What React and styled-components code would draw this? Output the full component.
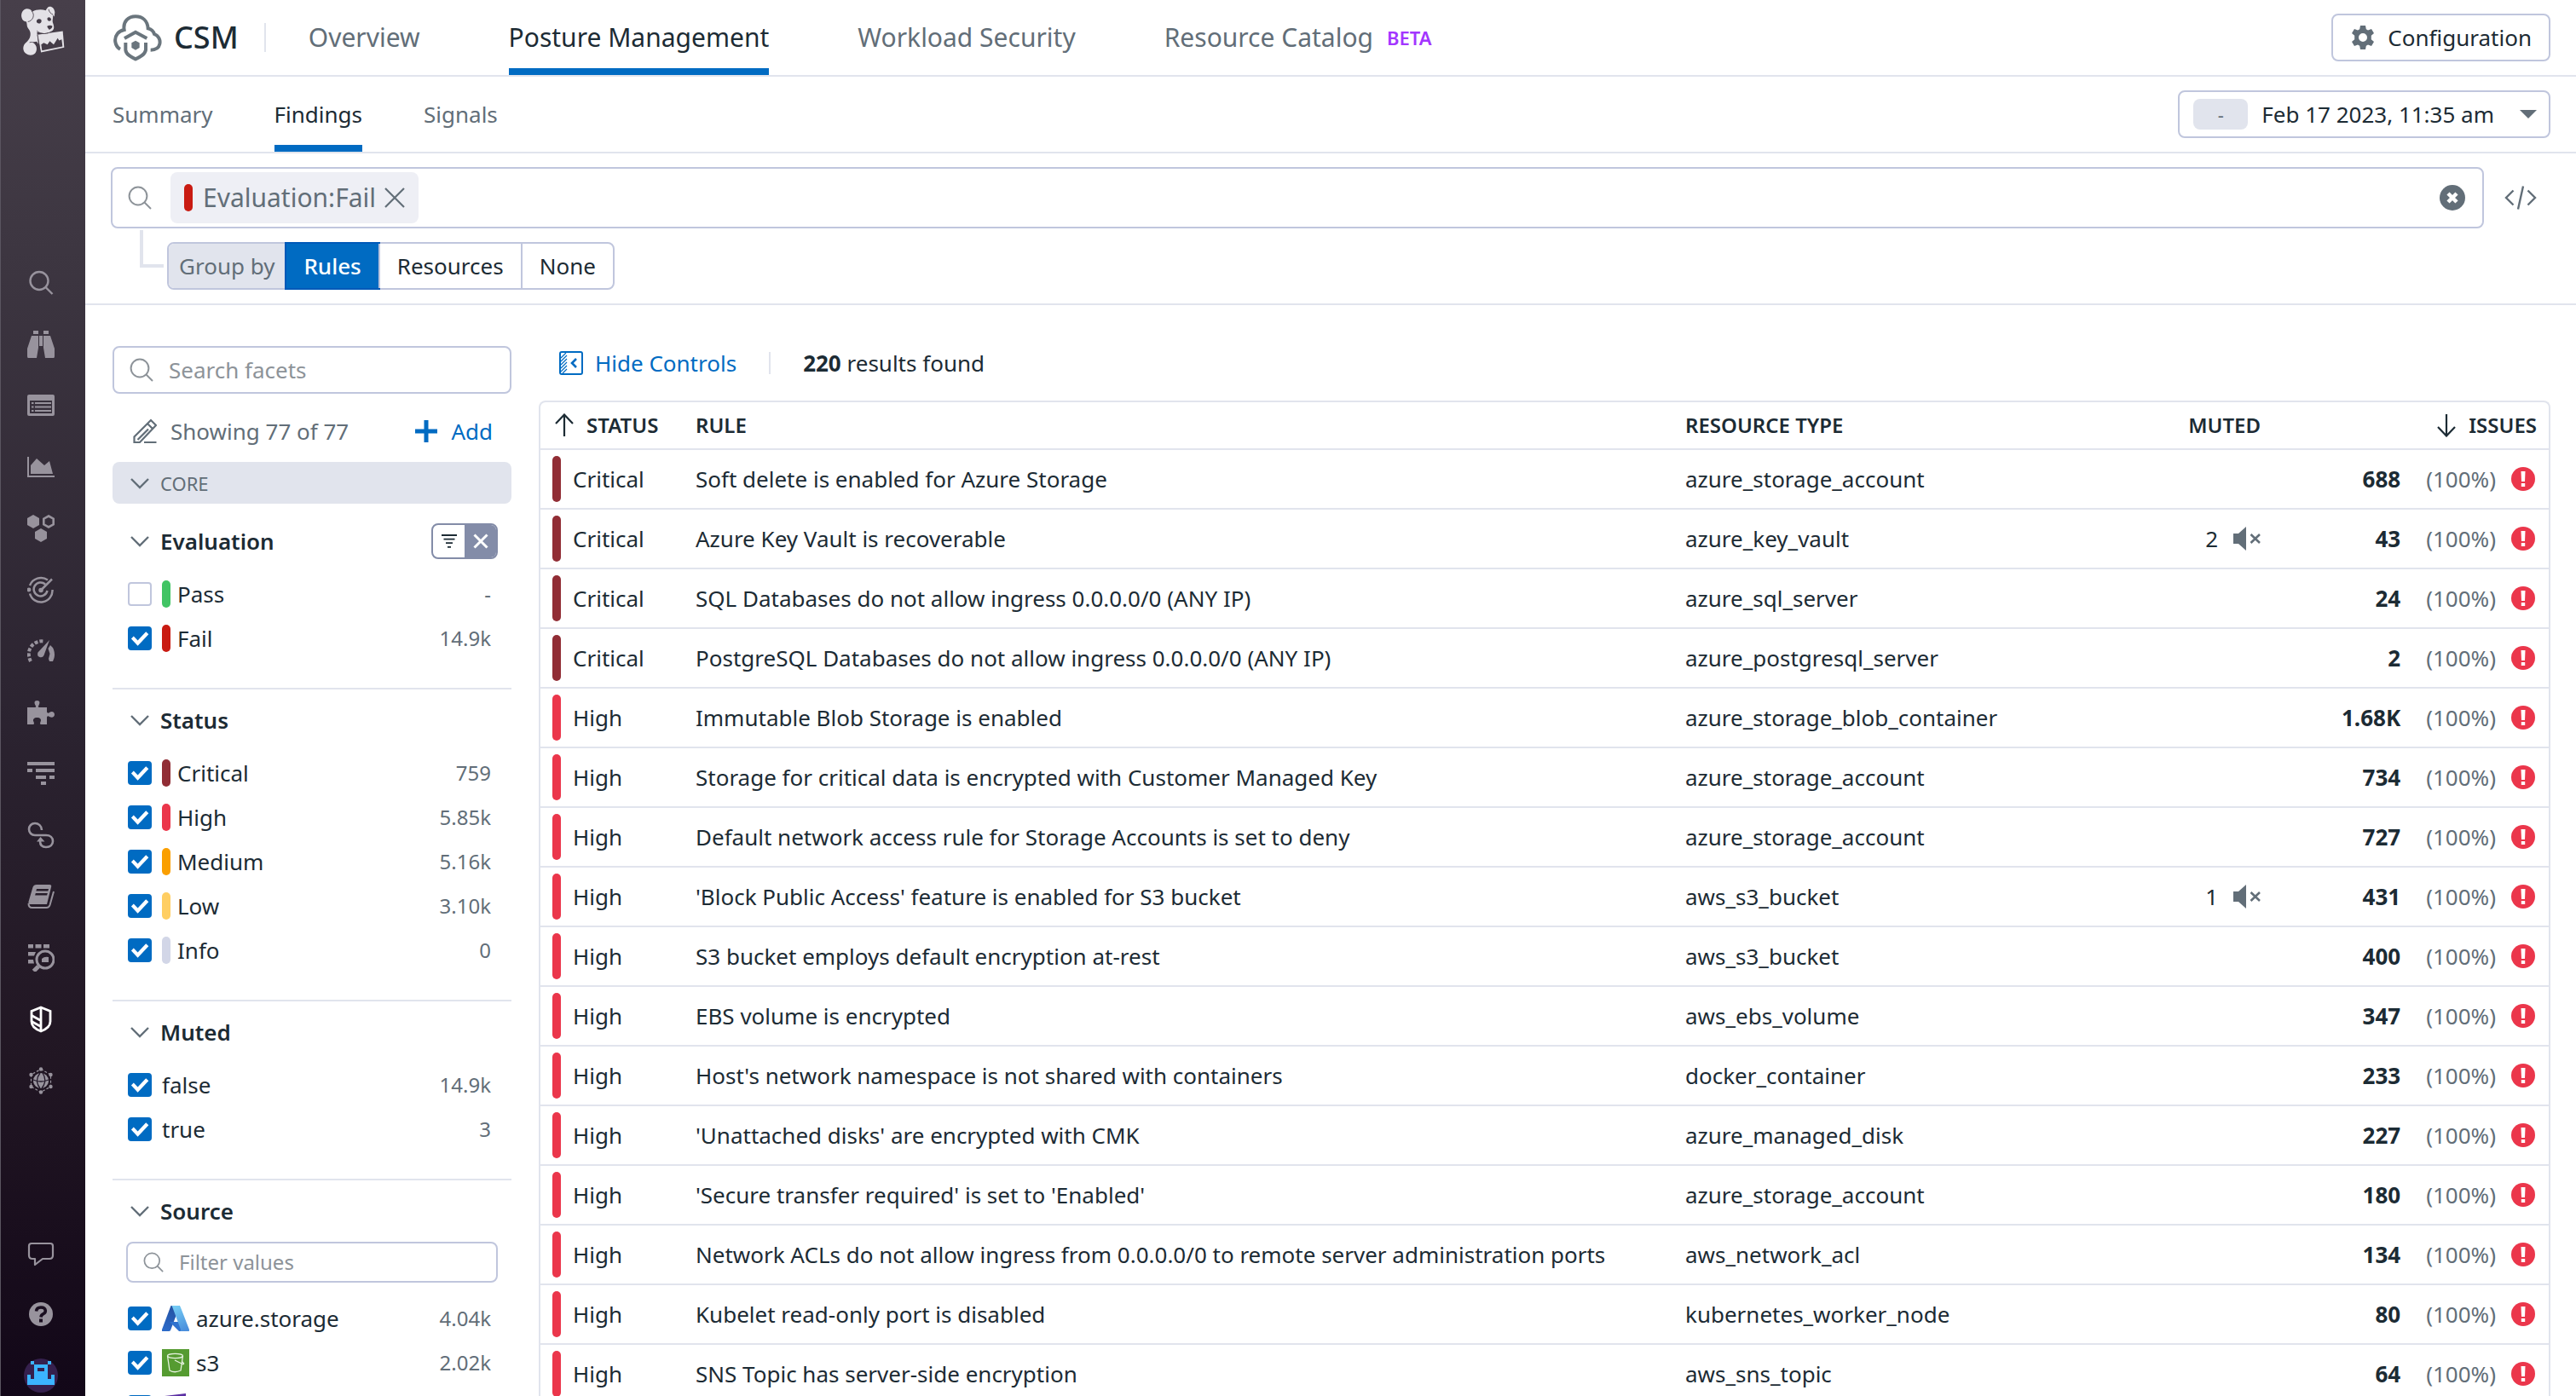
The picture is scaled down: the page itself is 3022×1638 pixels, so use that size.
import React, { useId } from "react";
import styled, { createGlobalStyle } from "styled-components";

const color = {
  text: "#1c2b34",
  muted: "#626e78",
  faint: "#8d9399",
  blue: "#006bc2",
  line: "#e1e4ed",
  inputLine: "#c0c6dd",
  fill: "#e1e4ed",
  critical: "#912d35",
  high: "#eb364b",
  medium: "#fa9f00",
  low: "#ffce62",
  info: "#d2d6e7",
  pass: "#41c464",
  fail: "#c91b12",
};

const Global = createGlobalStyle`
  *, *::before, *::after { box-sizing: border-box; }
  body {
    margin: 0;
    background: #fff;
    color: ${color.text};
    font-family: "Noto Sans", "Open Sans", sans-serif;
    font-size: 26px;
    line-height: 36px;
  }
  button, input {
    font: inherit;
    color: inherit;
    margin: 0;
    padding: 0;
    border: 0;
    background: none;
  }
  button { cursor: pointer; }
  a { color: inherit; text-decoration: none; }
  svg { display: block; flex: none; }
`;

/* ---------- shell ---------- */

const Shell = styled.div`
  display: flex;
  height: 100vh;
  overflow: hidden;
`;

const Rail = styled.nav`
  display: flex;
  flex-direction: column;
  flex: none;
  width: 100px;
  border-left: 1px solid #5a5560;
  background: linear-gradient(#473f4a, #3d3641 18%, #2b2330 52%, #211623 76%, #120718);
`;

const RailLogo = styled.a`
  display: flex;
  height: 296px;
  padding: 6px 0 0 22px;
`;

const RailItem = styled.a`
  display: flex;
  align-items: center;
  height: 72px;
  padding-left: 31px;
  color: ${(p) => (p.$active ? "#fff" : "#98939d")};
`;

const RailSpacer = styled.div`
  flex: 1;
`;

const RailUser = styled.a`
  display: flex;
  align-items: flex-end;
  height: 60px;
  padding: 0 0 4px 27px;
`;

const Main = styled.main`
  display: flex;
  flex-direction: column;
  flex: 1;
  min-width: 0;
`;

/* ---------- header ---------- */

const Bar = styled.header`
  display: flex;
  flex: none;
  height: 90px;
  padding: 0 30px 0 32px;
  border-bottom: 2px solid ${color.line};
`;

const Brand = styled.a`
  display: flex;
  align-items: center;
  gap: 14px;
  font-size: 36px;
  font-weight: 500;
`;

const BrandRule = styled.div`
  width: 2px;
  height: 34px;
  margin: 0 50px 0 30px;
  align-self: center;
  background: ${color.line};
`;

const Tabs = styled.nav`
  display: flex;
  flex: 1;
  gap: ${(p) => p.$gap}px;
  font-size: ${(p) => p.$size}px;
`;

const Tab = styled.a`
  display: flex;
  align-items: center;
  gap: 16px;
  border-top: 8px solid transparent;
  border-bottom: 8px solid ${(p) => (p.$active ? color.blue : "transparent")};
  color: ${(p) => (p.$active ? color.text : color.muted)};
`;

const Beta = styled.span`
  color: #a335ff;
  font-size: 22px;
  font-weight: 600;
`;

const OutlineButton = styled.button`
  display: flex;
  align-items: center;
  align-self: center;
  gap: 16px;
  height: 56px;
  padding: 0 20px 0 22px;
  border: 2px solid ${color.inputLine};
  border-radius: 8px;
`;

const TimeButton = styled(OutlineButton)`
  padding: 0 14px 0 16px;
`;

const TimeChip = styled.span`
  width: 64px;
  height: 36px;
  border-radius: 8px;
  background: ${color.fill};
  color: ${color.muted};
  font-size: 22px;
`;

const Caret = styled.span`
  margin-left: 14px;
  border: 10px solid transparent;
  border-top-color: ${color.muted};
  border-bottom: 0;
`;

/* ---------- query ---------- */

const Query = styled.section`
  flex: none;
  padding: 16px 16px 16px 30px;
  border-bottom: 2px solid ${color.line};
`;

const QueryRow = styled.div`
  display: flex;
  align-items: center;
  gap: 24px;
  padding-right: 30px;
`;

const QueryBox = styled.div`
  display: flex;
  align-items: center;
  flex: 1;
  height: 72px;
  padding: 0 20px 0 18px;
  border: 2px solid ${color.inputLine};
  border-radius: 8px;
  color: ${color.faint};
`;

const Chip = styled.span`
  display: flex;
  align-items: center;
  height: 60px;
  margin-left: 22px;
  padding: 0 16px;
  border-radius: 8px;
  background: #eeeff5;
  color: ${color.muted};
  font-size: 30px;

  button { margin-left: 10px; }
`;

const QueryInput = styled.input`
  flex: 1;
  min-width: 0;
  height: 60px;
  padding: 0 12px;
  outline: 0;
`;

const IconButton = styled.button`
  display: flex;
  color: ${color.muted};
`;

const GroupRow = styled.div`
  display: flex;
  gap: 4px;
`;

const Elbow = styled.div`
  width: 28px;
  height: 44px;
  margin: 2px 0 0 34px;
  border: solid ${color.line};
  border-width: 0 0 4px 4px;
`;

const Segments = styled.div`
  display: flex;
  height: 56px;
  margin-top: 16px;
  border: 2px solid ${color.inputLine};
  border-radius: 8px;
`;

const SegmentLabel = styled.span`
  display: flex;
  align-items: center;
  padding: 0 14px 0 12px;
  border-radius: 6px 0 0 6px;
  background: ${color.fill};
  color: ${color.muted};
`;

const Segment = styled.button`
  padding: 0 20px;
  font-weight: ${(p) => (p.$on ? 500 : 400)};
  color: ${(p) => (p.$on ? "#fff" : color.text)};
  background: ${(p) => (p.$on ? color.blue : "none")};
  outline: ${(p) => (p.$on ? "2px solid #0059b8" : "0")};

  & + & { border-left: ${(p) => (p.$divided ? `2px solid ${color.inputLine}` : "0")}; }
`;

/* ---------- facets ---------- */

const Body = styled.div`
  display: flex;
  flex: 1;
  gap: 32px;
  min-height: 0;
  padding: 0 30px 0 32px;
`;

const Facets = styled.aside`
  flex: none;
  width: 468px;
  padding-top: 48px;
`;

const SearchField = styled.label`
  display: flex;
  align-items: center;
  gap: 18px;
  height: ${(p) => (p.$small ? 48 : 56)}px;
  margin: ${(p) => (p.$small ? "10px 16px 16px" : "0")};
  padding: 0 18px;
  border: 2px solid ${color.inputLine};
  border-radius: 8px;
  color: ${color.faint};
  font-size: ${(p) => (p.$small ? 24 : 26)}px;

  input {
    flex: 1;
    min-width: 0;
    outline: 0;
  }
  input::placeholder { color: ${color.faint}; opacity: 1; }
`;

const Showing = styled.div`
  display: flex;
  align-items: center;
  justify-content: space-between;
  height: 52px;
  margin: 18px 22px 10px 24px;
  color: ${color.muted};
`;

const Inline = styled.span`
  display: flex;
  align-items: center;
  gap: 16px;
`;

const LinkButton = styled.button`
  display: flex;
  align-items: center;
  gap: ${(p) => p.$gap}px;
  color: ${color.blue};
`;

const CoreBar = styled.button`
  display: flex;
  align-items: center;
  gap: 12px;
  width: 100%;
  height: 49px;
  margin-bottom: 8px;
  padding-left: 20px;
  border-radius: 8px;
  background: ${color.fill};
  color: ${color.muted};
  font-size: 22px;
`;

const Section = styled.section`
  padding: 10px 0 32px;

  & + & { border-top: 2px solid ${color.line}; }
`;

const SectionHead = styled.div`
  display: flex;
  align-items: center;
  justify-content: space-between;
  height: 52px;
  margin-bottom: ${(p) => (p.$tight ? 0 : 10)}px;
  padding: 0 16px 0 20px;
`;

const SectionTitle = styled.button`
  display: flex;
  align-items: center;
  gap: 12px;
  font-weight: 600;

  svg { color: ${color.muted}; }
`;

const FilterToggle = styled.div`
  display: flex;
  width: 78px;
  height: 42px;
  overflow: hidden;
  border: 2px solid #838ca8;
  border-radius: 8px;

  button {
    display: flex;
    flex: 1;
    align-items: center;
    justify-content: center;
  }
  button + button {
    background: #838ca8;
    color: #fff;
  }
`;

const Item = styled.label`
  display: flex;
  align-items: center;
  height: 52px;
  padding: 0 24px 0 18px;
`;

const Check = styled.input`
  appearance: none;
  flex: none;
  width: 28px;
  height: 28px;
  margin-right: 12px;
  border: 2px solid ${color.inputLine};
  border-radius: 4px;

  &:checked {
    border-color: ${color.blue};
    background: ${color.blue};
  }
  &:checked::after {
    content: "";
    display: block;
    height: 24px;
    background: #fff;
    clip-path: polygon(8% 52%, 20% 40%, 40% 60%, 80% 18%, 93% 30%, 40% 86%);
  }
`;

const Pill = styled.span`
  flex: none;
  width: 10px;
  height: ${(p) => p.$height}px;
  margin-right: ${(p) => p.$gap}px;
  border-radius: 5px;
  background: ${(p) => p.$color};
`;

const ItemIcon = styled.span`
  margin-right: 8px;
`;

const ItemCount = styled.span`
  margin-left: auto;
  color: ${color.muted};
  font-size: 24px;
`;

/* ---------- results ---------- */

const Results = styled.section`
  flex: 1;
  min-width: 0;
  padding-top: 40px;
`;

const Toolbar = styled.div`
  display: flex;
  align-items: center;
  height: 56px;
  margin-bottom: 16px;
  padding-left: 24px;
`;

const ToolRule = styled.div`
  width: 2px;
  height: 26px;
  margin: 0 38px;
  background: ${color.line};
`;

const TableFrame = styled.div`
  border: 2px solid ${color.line};
  border-bottom: 0;
  border-radius: 8px 8px 0 0;
`;

const Table = styled.table`
  width: 100%;
  table-layout: fixed;
  border-spacing: 0;
`;

const Head = styled.th`
  width: ${(p) => p.$width || "auto"};
  height: 56px;
  padding: ${(p) => p.$pad || "0 12px"};
  border-bottom: 2px solid ${color.line};
  font-size: 24px;
  font-weight: 600;
  text-align: left;
`;

const Cell = styled.td`
  height: 70px;
  padding: ${(p) => p.$pad || "0 12px"};
  border-bottom: 2px solid ${color.line};
  white-space: nowrap;
`;

const CellRow = styled.div`
  display: flex;
  align-items: center;
  justify-content: ${(p) => (p.$end ? "flex-end" : "flex-start")};
  gap: ${(p) => p.$gap || 0}px;
`;

const Percent = styled.span`
  margin-left: 12px;
  color: ${color.muted};
`;

/* ---------- icons ---------- */

const Magnifier = ({ size = 28, width = 2 }) => (
  <svg width={size} height={size} viewBox="0 0 28 28" fill="none" stroke="currentColor" strokeWidth={width}>
    <circle cx="12" cy="12" r="10.4" />
    <path d="M19.5 19.5 27 27" />
  </svg>
);

const Chevron = () => (
  <svg width="24" height="24" viewBox="0 0 24 24" fill="none" stroke="currentColor" strokeWidth="2.4">
    <path d="M2 7 12 17 22 7" />
  </svg>
);

const Cross = ({ size, width, inset = 1 }) => (
  <svg width={size} height={size} viewBox="0 0 24 24" fill="none" stroke="currentColor" strokeWidth={width}>
    <path d={`M${inset} ${inset} ${24 - inset} ${24 - inset}M${24 - inset} ${inset} ${inset} ${24 - inset}`} />
  </svg>
);

const Arrow = ({ down }) => (
  <svg width="24" height="28" viewBox="0 0 24 28" fill="none" stroke="currentColor" strokeWidth="2.2">
    <path d={down ? "M12 1V26M2 16 12 26.5 22 16" : "M12 27V2M2 12 12 1.5 22 12"} />
  </svg>
);

const Pencil = () => (
  <svg width="28" height="30" viewBox="0 0 28 30" fill="none" stroke="currentColor" strokeWidth="2.2">
    <path d="M1.5 28V21.5L21 2l6 6L8 28ZM17 6l6 6M5.500 25 18 12.500M13 28H27.500" />
  </svg>
);

const Gear = () => (
  <svg width="26" height="28" viewBox="0 0 26 28" fill={color.muted} fillRule="evenodd">
    <path d="M10 0h6l.8 4.200 2.200 1.200 4-1.500 3 5.200-3.200 2.700v4.400l3.200 2.700-3 5.200-4-1.500-2.200 1.200L16 28h-6l-.8-4.200L7 22.600l-4 1.500-3-5.200 3.200-2.700v-4.400L0 9.100l3-5.200 4 1.500 2.200-1.200ZM13 9a5 5 0 1 0 0 10 5 5 0 0 0 0-10Z" />
  </svg>
);

const ClearCircle = () => (
  <svg width="30" height="30" viewBox="0 0 30 30">
    <circle cx="15" cy="15" r="15" fill={color.muted} />
    <path d="M10 10 20 20M20 10 10 20" stroke="#fff" strokeWidth="4.500" />
  </svg>
);

const Code = () => (
  <svg width="38" height="28" viewBox="0 0 38 28" fill="none" stroke="currentColor" strokeWidth="2.400">
    <path d="M10.500 5.500 2 14l8.500 8.500M27.500 5.500 36 14l-8.500 8.500M22 .5 16 27.500" />
  </svg>
);

const PanelClose = () => (
  <svg width="28" height="28" viewBox="0 0 28 28" fill="none" stroke="currentColor" strokeWidth="2">
    <rect x="1" y="1" width="26" height="26" rx="2" />
    <path d="M20 9l-5 5 5 5" strokeWidth="2.600" />
    <path d="M2 8 8 2M2 12l7-7M2 16l7-7M2 20l7-7M2 24l7-7M4 26l5-5" strokeWidth="1.200" />
  </svg>
);

const Plus = () => (
  <svg width="26" height="26" viewBox="0 0 26 26" fill="currentColor">
    <path d="M10.500 0h5v10.500H26v5H15.500V26h-5V15.500H0v-5h10.500Z" />
  </svg>
);

const FilterLines = () => (
  <svg width="18" height="16" viewBox="0 0 18 16" stroke={color.text} strokeWidth="1.800">
    <path d="M0 1H18M2.500 5.600H15.500M5 10.200H13M7 14.800H11" />
  </svg>
);

const MutedSpeaker = () => (
  <svg width="32" height="28" viewBox="0 0 32 28" fill={color.muted}>
    <path d="M0 8h6l9-8v28l-9-8H0Z" />
    <path d="M20.500 9 31 19M31 9 20.500 19" stroke={color.muted} strokeWidth="2.600" />
  </svg>
);

const Alert = () => (
  <svg width="28" height="28" viewBox="0 0 28 28">
    <circle cx="14" cy="14" r="14" fill={color.high} />
    <path d="M11.500 5h5l-.5 12h-4ZM11.800 19h4.400v4h-4.400Z" fill="#fff" />
  </svg>
);

const CloudShield = () => (
  <svg width="58" height="58" viewBox="392 44 174 174" fill="none" stroke="#6a757d" strokeWidth="12">
    <path d="M419 172C400 162 396 134 409 118q8-11 24-14C428 74 448 57 473 57c26 0 42 16 44 42 14 3 19 10 22 20 16 6 22 22 19 35-3 14-13 21-32 21" />
    <path d="M434 134 473 112 513 134" />
    <path d="M438 149v26c2 16 18 24 35 32 18-8 33-16 36-32v-26" />
    <path d="M473 142 487 150v17l-14 8-14-8v-17Z" fill="#6a757d" stroke="none" />
  </svg>
);

const Dog = () => (
  <svg width="54" height="61" viewBox="70 18 162 182">
    <g fill="#e3e1e6">
      <path d="M96 30c-14 0-22 16-19 30 2 10 8 15 17 16 3 12 1 16 6 23 7 9 9 14 8 24-2 16-12 22-20 31-9 12-5 27 4 34 10 8 24 8 32 0 7-8 8-20 2-30-3-5-6-8-10-10l14-2 6 8-5-42 14 4c22 2 34-4 42-10 6-6 4-16 0-26-3-10 3-20-1-28l6 6 2-16c-2-12-8-19-18-19-6 0-10 6-14 13-14-4-34-4-47 5-4-8-12-11-19-11Z" />
      <path d="M133 122l89-13 5 58-82 17Z" />
    </g>
    <g fill="#443c47">
      <path d="M131 70c5-6 15-5 16 2 1 9-10 13-15 8-3-3-3-7-1-10ZM169 62c5-4 11 0 12 6 0 6-8 8-12 3-2-3-2-7 0-9ZM167 92c5-4 14-4 18-1 1 6-6 12-11 13-3-4-7-8-7-12Z" />
      <path d="M146 156l9-6 13 6 8-12 14 12 14-22 5 8 9-4 3 25-72 14Z" />
    </g>
    <path
      d="M112 38c6 6 9 14 5 24-4 8-10 13-18 14M172 32c2 10 8 16 16 19M105 149c13-4 20 3 25 12M131 108c10 10 24 12 40 8M133 122l10 62"
      fill="none"
      stroke="#443c47"
      strokeWidth="2.500"
    />
  </svg>
);

const Glyph = ({ children }) => (
  <svg width="32" height="32" viewBox="0 0 32 32" fill="currentColor">
    {children}
  </svg>
);

const line = { fill: "none", stroke: "currentColor" };

const railIcons = {
  search: (
    <g {...line} strokeWidth="2.400">
      <circle cx="14" cy="13.500" r="10.500" />
      <path d="M21.500 21 29.500 29" />
    </g>
  ),
  binoculars: <path d="M7 0h6v4H7ZM19 0h6v4h-6ZM14 6h4v12h-4ZM5 6h8v14l-2 12H1q-1 0-1-2v-9ZM27 6h-8v14l2 12h10q1 0 1-2v-9Z" />,
  list: (
    <path fillRule="evenodd" d="M2 3h28q2 0 2 2v21q0 2-2 2H2q-2 0-2-2V5q0-2 2-2ZM3 10v15h26V10ZM5 12h2.500v2H5ZM9 12h19v2H9ZM5 16.500h2.500v2H5ZM9 16.500h19v2H9ZM5 21h2.500v2H5ZM9 21h19v2H9Z" />
  ),
  chart: <path d="M0 4h2v22h30v2H0ZM4 24V14l7-8 9 8 6-5 4 15Z" />,
  hexes: (
    <>
      <path d="M7 0l7 4v8l-7 4-7-4V4ZM16 16l7 4v8l-7 4-7-4v-8Z" />
      <path {...line} strokeWidth="2.600" d="M25 1.500l5.700 3.200v6.600L25 14.500l-5.700-3.200V4.700Z" />
    </>
  ),
  target: (
    <g {...line} strokeWidth="2.500">
      <path d="M3 11A14 14 0 0 1 24 4.500M29.500 16A13.500 13.500 0 0 1 3 20.500M21 9.500A8 8 0 1 0 23.500 17M15.500 17 29 3.500" />
      <circle cx="2" cy="16" r="1.200" />
      <circle cx="16" cy="16.500" r="1.500" />
    </g>
  ),
  gauge: (
    <>
      <path d="M26 3 12.500 17.500q-1.500 4.500 2 5.500t5-2ZM27 9l3 3q3 6 1.500 12l-1.500 4h-4l-1-3 1.500-6-2-6Z" />
      <path {...line} strokeWidth="4" strokeDasharray="4 2" d="M4 28C-3 14 8 3 19 4.500" />
    </>
  ),
  puzzle: (
    <path d="M0 10h9.500q1.500-1 0-2.500C8 5 8 2 11.500 2S15 5 13.500 7.500q-1.500 1.500 0 2.500H23v5.500q1 2 3 .5c3-2 6-.5 6 2.500s-3 4-6 2.500q-2-1.500-3 .5V30h-7.500q-1-1.500 0-3c1.500-3-.5-5-4-5s-5.500 2-4 5q1 1.500 0 3H0Z" />
  ),
  filter: <path d="M0 2h32v4H0ZM0 10h6v4H0ZM10 10h22v4H10ZM10 18h12v4H10ZM26 18h6v4h-6ZM16 25h6v4h-6Z" />,
  link: (
    <>
      <path {...line} strokeWidth="2.600" d="M17 10c0-5-4-8-8-8s-7 3-7 7 3 7 7 7h13c5 0 8 3 8 7s-3 7-8 7-7-3-7-7" />
      <path d="M11 23.500 15.500 18l5 5.500Z" />
    </>
  ),
  book: (
    <>
      <path fillRule="evenodd" d="M11 2h15q3 0 2 3l-5 20H3q-2 0-1.500-3L6.500 5q1-3 4.500-3ZM11 7l-.7 2.400h14L25 7ZM9.800 12l-.7 2.400h14l.7-2.400Z" />
      <path {...line} strokeWidth="2" d="M1.500 24c0 4 1.500 5 4 5h17q3 0 4-3l4.500-16" />
    </>
  ),
  logs: (
    <>
      <path d="M1 0h6v4.500H1ZM9.500 0h7v4.500h-7ZM19 0h7v4.500h-7ZM1 9h9l-2 4.500H1ZM1 18h6l1 4.500H1Z" />
      <circle {...line} strokeWidth="3" cx="21" cy="18" r="10" />
      <path {...line} strokeWidth="5" d="M13 26 7.500 31.500" />
      <path d="M17 21v-4q3-3 8-2v6Z" />
    </>
  ),
  shield: (
    <>
      <path {...line} strokeWidth="2.800" d="M16 2 27 6.500v12Q27 26 16 30 5 26 5 18.500v-12Z" />
      <path {...line} strokeWidth="2.800" d="M16 3V29M5 11.500 15 17M5 18.500 15 24" />
    </>
  ),
  globe: (
    <>
      <circle cx="16" cy="16" r="9" />
      <path fill="none" stroke="#23192a" strokeWidth="1.300" d="M7 15q9 4 18 0M15 7q-7 9 0 18M18 7q6 9-1 18" />
      <circle cx="16" cy="2.500" r="2.200" />
      <circle cx="16" cy="29.500" r="2.200" />
      <circle cx="4.500" cy="9" r="2.200" />
      <circle cx="27.500" cy="9" r="2.200" />
      <circle cx="4.500" cy="23" r="2.200" />
      <circle cx="27.500" cy="23" r="2.200" />
      <path {...line} strokeWidth="1.200" strokeDasharray="3 2" d="M16 2.500 27.500 9v14L16 29.500 4.500 23V9Z" />
    </>
  ),
  chat: <path {...line} strokeWidth="2.200" strokeLinejoin="round" d="M5 5h22q3 0 3 3v11q0 4-4 4h-8L9 30v-7H6q-4 0-4-4V8q0-3 3-3Z" />,
  help: (
    <>
      <circle cx="16" cy="16" r="14" />
      <path fill="none" stroke="#1a0e20" strokeWidth="3.600" d="M10.500 12.500q.5-4.500 5.500-4.500t5.300 4q0 2.500-2.500 3.700T16 19.500" />
      <path fill="#1a0e20" d="M14 21.500h4v4h-4Z" />
    </>
  ),
};

const Avatar = () => (
  <svg width="40" height="40" viewBox="0 0 40 40">
    <circle cx="20" cy="20" r="20" fill="#35204d" />
    <path
      fill="#3bb4ff"
      fillRule="evenodd"
      d="M8 3h4v4h16V3h4v4h-4v17h4v-5h4v12H4V19h4v5h4V7H8ZM16 11v4h8v-4Z"
    />
  </svg>
);

const Azure = () => {
  const id = useId();
  return (
    <svg width="32" height="30" viewBox="0 0 32 30">
      <defs>
        <linearGradient id={`${id}a`} x1="0.700" y1="0" x2="0.300" y2="1">
          <stop offset="0" stopColor="#2450a0" />
          <stop offset="1" stopColor="#2b6ac8" />
        </linearGradient>
        <linearGradient id={`${id}b`} x1="0.300" y1="0" x2="0.700" y2="1">
          <stop offset="0" stopColor="#74cbf4" />
          <stop offset="1" stopColor="#4a8edc" />
        </linearGradient>
      </defs>
      <path d="M10.500 0H21L10 29q-.6 1-2 1H1q-2 0-1-2Z" fill={`url(#${id}a)`} />
      <path d="M9 19h15l1 11h-5Z" fill="#2f72cf" />
      <path d="M11 0h9q1 0 1.500 1L32 28q.5 2-1 2H21q1.500-.5 1-2L12 1q-.3-.8-1-1Z" fill={`url(#${id}b)`} />
    </svg>
  );
};

const Bucket = () => (
  <svg width="32" height="32" viewBox="0 0 32 32">
    <rect width="32" height="32" fill="#559b31" />
    <g fill="none" stroke="#e6f2df" strokeWidth="1.300">
      <ellipse cx="15.500" cy="8" rx="9" ry="2.600" />
      <path d="M6.500 8 9 25q6 3.500 13 0L24.500 8M15 13l9 4.500q2 .5 1.500-1l-2-2" />
    </g>
  </svg>
);

const Purple = () => (
  <svg width="32" height="32" viewBox="0 0 32 32">
    <path d="M3 3 28 0v32L3 29Z" fill="#5b2fa3" />
  </svg>
);

/* ---------- data ---------- */

const sections = [
  {
    title: "Evaluation",
    filtered: true,
    items: [
      { name: "Pass", count: "-", pill: color.pass, off: true },
      { name: "Fail", count: "14.9k", pill: color.fail },
    ],
  },
  {
    title: "Status",
    items: [
      { name: "Critical", count: "759", pill: color.critical },
      { name: "High", count: "5.85k", pill: color.high },
      { name: "Medium", count: "5.16k", pill: color.medium },
      { name: "Low", count: "3.10k", pill: color.low },
      { name: "Info", count: "0", pill: color.info },
    ],
  },
  {
    title: "Muted",
    items: [
      { name: "false", count: "14.9k" },
      { name: "true", count: "3" },
    ],
  },
  {
    title: "Source",
    search: "Filter values",
    items: [
      { name: "azure.storage", count: "4.04k", icon: <Azure /> },
      { name: "s3", count: "2.02k", icon: <Bucket /> },
      { name: "", count: "", icon: <Purple /> },
    ],
  },
];

const rows = [
  ["Critical", "Soft delete is enabled for Azure Storage", "azure_storage_account", "", "688"],
  ["Critical", "Azure Key Vault is recoverable", "azure_key_vault", "2", "43"],
  ["Critical", "SQL Databases do not allow ingress 0.0.0.0/0 (ANY IP)", "azure_sql_server", "", "24"],
  ["Critical", "PostgreSQL Databases do not allow ingress 0.0.0.0/0 (ANY IP)", "azure_postgresql_server", "", "2"],
  ["High", "Immutable Blob Storage is enabled", "azure_storage_blob_container", "", "1.68K"],
  ["High", "Storage for critical data is encrypted with Customer Managed Key", "azure_storage_account", "", "734"],
  ["High", "Default network access rule for Storage Accounts is set to deny", "azure_storage_account", "", "727"],
  ["High", "'Block Public Access' feature is enabled for S3 bucket", "aws_s3_bucket", "1", "431"],
  ["High", "S3 bucket employs default encryption at-rest", "aws_s3_bucket", "", "400"],
  ["High", "EBS volume is encrypted", "aws_ebs_volume", "", "347"],
  ["High", "Host's network namespace is not shared with containers", "docker_container", "", "233"],
  ["High", "'Unattached disks' are encrypted with CMK", "azure_managed_disk", "", "227"],
  ["High", "'Secure transfer required' is set to 'Enabled'", "azure_storage_account", "", "180"],
  ["High", "Network ACLs do not allow ingress from 0.0.0.0/0 to remote server administration ports", "aws_network_acl", "", "134"],
  ["High", "Kubelet read-only port is disabled", "kubernetes_worker_node", "", "80"],
  ["High", "SNS Topic has server-side encryption", "aws_sns_topic", "", "64"],
];

const statusColor = { Critical: color.critical, High: color.high };

const railTop = ["search", "binoculars", "list", "chart", "hexes", "target", "gauge", "puzzle", "filter", "link", "book", "logs", "shield", "globe"];
const railBottom = ["chat", "help"];

/* ---------- page ---------- */

const RailLink = ({ name }) => (
  <RailItem href="#" $active={name === "shield"} aria-label={name}>
    <Glyph>{railIcons[name]}</Glyph>
  </RailItem>
);

const FacetSection = ({ title, filtered, search, items }) => (
  <Section>
    <SectionHead $tight={Boolean(search)}>
      <SectionTitle type="button">
        <Chevron />
        {title}
      </SectionTitle>
      {filtered && (
        <FilterToggle>
          <button type="button" aria-label="Filter"><FilterLines /></button>
          <button type="button" aria-label="Clear"><Cross size={18} width={4} inset={2} /></button>
        </FilterToggle>
      )}
    </SectionHead>
    {search && (
      <SearchField $small>
        <Magnifier size={24} />
        <input type="text" placeholder={search} aria-label={search} />
      </SearchField>
    )}
    {items.map((item) => (
      <Item key={item.name}>
        <Check type="checkbox" defaultChecked={!item.off} />
        {item.pill && <Pill $color={item.pill} $height={32} $gap={8} />}
        {item.icon && <ItemIcon>{item.icon}</ItemIcon>}
        {item.name}
        <ItemCount>{item.count}</ItemCount>
      </Item>
    ))}
  </Section>
);

export default function App() {
  return (
    <>
      <Global />
      <Shell>
        <Rail>
          <RailLogo href="#" aria-label="Home"><Dog /></RailLogo>
          {railTop.map((name) => <RailLink key={name} name={name} />)}
          <RailSpacer />
          {railBottom.map((name) => <RailLink key={name} name={name} />)}
          <RailUser href="#" aria-label="Account"><Avatar /></RailUser>
        </Rail>

        <Main>
          <Bar>
            <Brand href="#">
              <CloudShield />
              CSM
            </Brand>
            <BrandRule />
            <Tabs $gap={104} $size={30}>
              <Tab href="#">Overview</Tab>
              <Tab href="#" $active>Posture Management</Tab>
              <Tab href="#">Workload Security</Tab>
              <Tab href="#">
                Resource Catalog
                <Beta>BETA</Beta>
              </Tab>
            </Tabs>
            <OutlineButton type="button">
              <Gear />
              Configuration
            </OutlineButton>
          </Bar>

          <Bar as="div">
            <Tabs $gap={72} $size={26}>
              <Tab href="#">Summary</Tab>
              <Tab href="#" $active>Findings</Tab>
              <Tab href="#">Signals</Tab>
            </Tabs>
            <TimeButton type="button">
              <TimeChip>-</TimeChip>
              Feb 17 2023, 11:35 am
              <Caret />
            </TimeButton>
          </Bar>

          <Query>
            <QueryRow>
              <QueryBox>
                <Magnifier />
                <Chip>
                  <Pill $color={color.fail} $height={32} $gap={12} />
                  Evaluation:Fail
                  <IconButton type="button" aria-label="Remove"><Cross size={24} width={2.2} /></IconButton>
                </Chip>
                <QueryInput type="text" aria-label="Query" />
                <IconButton type="button" aria-label="Clear"><ClearCircle /></IconButton>
              </QueryBox>
              <IconButton type="button" aria-label="Code"><Code /></IconButton>
            </QueryRow>
            <GroupRow>
              <Elbow />
              <Segments>
                <SegmentLabel>Group by</SegmentLabel>
                <Segment type="button" $on>Rules</Segment>
                <Segment type="button">Resources</Segment>
                <Segment type="button" $divided>None</Segment>
              </Segments>
            </GroupRow>
          </Query>

          <Body>
            <Facets>
              <SearchField>
                <Magnifier />
                <input type="text" placeholder="Search facets" aria-label="Search facets" />
              </SearchField>
              <Showing>
                <Inline>
                  <Pencil />
                  Showing 77 of 77
                </Inline>
                <LinkButton type="button" $gap={16}>
                  <Plus />
                  Add
                </LinkButton>
              </Showing>
              <CoreBar type="button">
                <Chevron />
                CORE
              </CoreBar>
              {sections.map((section) => <FacetSection key={section.title} {...section} />)}
            </Facets>

            <Results>
              <Toolbar>
                <LinkButton type="button" $gap={14}>
                  <PanelClose />
                  Hide Controls
                </LinkButton>
                <ToolRule />
                <span><b>220</b> results found</span>
              </Toolbar>
              <TableFrame>
                <Table>
                  <thead>
                    <tr>
                      <Head $width="170px" $pad="0 0 0 16px">
                        <CellRow $gap={14}><Arrow />STATUS</CellRow>
                      </Head>
                      <Head>RULE</Head>
                      <Head $width="529px">RESOURCE TYPE</Head>
                      <Head $width="170px"><CellRow $end>MUTED</CellRow></Head>
                      <Head $width="326px" $pad="0 14px 0 0">
                        <CellRow $end $gap={14}><Arrow down />ISSUES</CellRow>
                      </Head>
                    </tr>
                  </thead>
                  <tbody>
                    {rows.map(([status, rule, type, muted, issues]) => (
                      <tr key={rule}>
                        <Cell $pad="0 0 0 14px">
                          <CellRow>
                            <Pill $color={statusColor[status]} $height={54} $gap={14} />
                            {status}
                          </CellRow>
                        </Cell>
                        <Cell>{rule}</Cell>
                        <Cell>{type}</Cell>
                        <Cell>
                          {muted && <CellRow $end $gap={18}>{muted}<MutedSpeaker /></CellRow>}
                        </Cell>
                        <Cell $pad="0 16px 0 0">
                          <CellRow $end $gap={18}>
                            <b>{issues}</b>
                            <Percent>(100%)</Percent>
                            <Alert />
                          </CellRow>
                        </Cell>
                      </tr>
                    ))}
                  </tbody>
                </Table>
              </TableFrame>
            </Results>
          </Body>
        </Main>
      </Shell>
    </>
  );
}
